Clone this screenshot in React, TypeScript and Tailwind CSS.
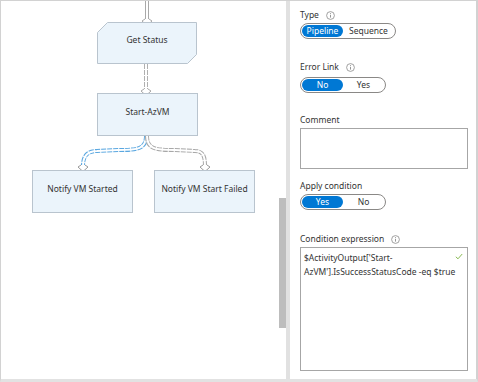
import React from "react";

const font = { fontFamily: '"Noto Sans", "Open Sans", sans-serif' };

function InfoIcon() {
  return (
    <svg width="9" height="9" viewBox="0 0 9 9" className="ml-[7px]">
      <circle cx="4.5" cy="4.5" r="3.9" fill="none" stroke="#8a8a8a" strokeWidth="0.8" />
      <line x1="4.5" y1="3.8" x2="4.5" y2="6.6" stroke="#8a8a8a" strokeWidth="0.9" />
      <circle cx="4.5" cy="2.6" r="0.5" fill="#8a8a8a" />
    </svg>
  );
}

function Label({ text, info, className = "" }: { text: string; info?: boolean; className?: string }) {
  return (
    <div className={`flex items-center h-[12px] text-[8.5px] text-[#333] ${className}`}>
      <span>{text}</span>
      {info && <InfoIcon />}
    </div>
  );
}

function Toggle({ options, selected, className = "" }: { options: string[]; selected: number; className?: string }) {
  return (
    <div className={`inline-flex items-center h-[16px] border border-[#8a8886] rounded-full px-[1px] self-start ${className}`}>
      {options.map((o, i) => (
        <div
          key={o}
          className={`h-[12px] min-w-[41px] flex items-center justify-center rounded-full text-[8.5px] ${
            i === selected ? "px-[3px] bg-[#0078d4] text-white" : "px-[6px] text-[#333]"
          }`}
        >
          {o}
        </div>
      ))}
    </div>
  );
}

function Pipe({ d, color, dashed }: { d: string; color: string; dashed?: boolean }) {
  return (
    <g fill="none">
      <path d={d} stroke={color} strokeWidth="4" strokeDasharray={dashed ? "5 1" : undefined} />
      <path d={d} stroke="#fff" strokeWidth="2" />
    </g>
  );
}

function Arrow({ x, y, color }: { x: number; y: number; color: string }) {
  return (
    <path
      d={`M${x - 2} ${y - 2} L${x - 5} ${y} L${x} ${y + 4.5} L${x + 5} ${y} L${x + 2} ${y - 2}`}
      fill="#fff"
      stroke={color}
      strokeWidth="1"
    />
  );
}

function Node({ text, className }: { text: string; className: string }) {
  return (
    <div
      className={`absolute w-[101px] h-[43px] pb-[5px] bg-[#ebf4fb] border border-[#b9c4ce] flex items-center justify-center text-[8.5px] text-[#333] ${className}`}
    >
      {text}
    </div>
  );
}

export default function App() {
  return (
    <div className="w-[478px] h-[382px] bg-white flex border border-[#d2d2d2] border-b-[3px] border-b-[#e2e2e2]" style={font}>
      <div className="relative w-[285px] h-full overflow-hidden">
        <svg className="absolute left-0 top-0" width="285" height="380">
          <Pipe d="M146 -2 L146 19" color="#a9a9a9" />
          <Arrow x={146} y={20} color="#a9a9a9" />
          <polygon points="96.5,31.5 106.5,21.5 195.5,21.5 195.5,53.5 186.5,62.5 96.5,62.5" fill="#ebf4fb" stroke="#b9c4ce" />
          <Pipe d="M145 63 L145 89" color="#b0b0b0" dashed />
          <Arrow x={145} y={90} color="#a9a9a9" />
          <Pipe d="M145 135 C145 148 137 149 117 149 L96 150 C86 150 82 155 82 165" color="#5aa7e0" dashed />
          <Pipe d="M146 135 C146 148 154 149 174 149 L194 150 C202 150 204 155 204 165" color="#a8a8a8" dashed />
          <Arrow x={82} y={166} color="#9a9a9a" />
          <Arrow x={204} y={166} color="#9a9a9a" />
        </svg>
        <div className="absolute left-[96px] top-[21px] w-[100px] h-[42px] pb-[5px] flex items-center justify-center text-[8.5px] text-[#333]">
          Get Status
        </div>
        <Node text="Start-AzVM" className="left-[96px] top-[92px]" />
        <Node text="Notify VM Started" className="left-[31px] top-[169px]" />
        <Node text="Notify VM Start Failed" className="left-[153px] top-[169px]" />
        <div className="absolute right-0 top-[197px] w-[7px] h-[130px] bg-[#bdbdbd]" />
      </div>
      <div className="w-[4px] h-full bg-[#e1e1e1]" />
      <div className="flex-1 flex flex-col pl-[10px] pr-[8px] pt-[8px] border-r border-[#d2d2d2]">
        <Label text="Type" info />
        <Toggle options={["Pipeline", "Sequence"]} selected={0} className="mt-[2px]" />
        <Label text="Error Link" info className="mt-[22px]" />
        <Toggle options={["No", "Yes"]} selected={0} className="mt-[4px]" />
        <Label text="Comment" className="mt-[21px]" />
        <div className="mt-[2px] h-[41px] border border-[#a6a6a6]" />
        <Label text="Apply condition" className="mt-[11px]" />
        <Toggle options={["Yes", "No"]} selected={0} className="mt-[2px]" />
        <Label text="Condition expression" info className="mt-[23px]" />
        <div className="relative mt-[2px] h-[124px] border border-[#a6a6a6] px-[3px] py-[3px] text-[8.5px] leading-[14px] text-[#333]">
          <div>$ActivityOutput['Start-</div>
          <div>AzVM'].IsSuccessStatusCode -eq $true</div>
          <svg className="absolute right-[4px] top-[5px]" width="8" height="7" viewBox="0 0 8 7">
            <path d="M0.8 3.8 L3 5.8 L7.2 1" fill="none" stroke="#7cb342" strokeWidth="0.9" />
          </svg>
        </div>
      </div>
    </div>
  );
}
